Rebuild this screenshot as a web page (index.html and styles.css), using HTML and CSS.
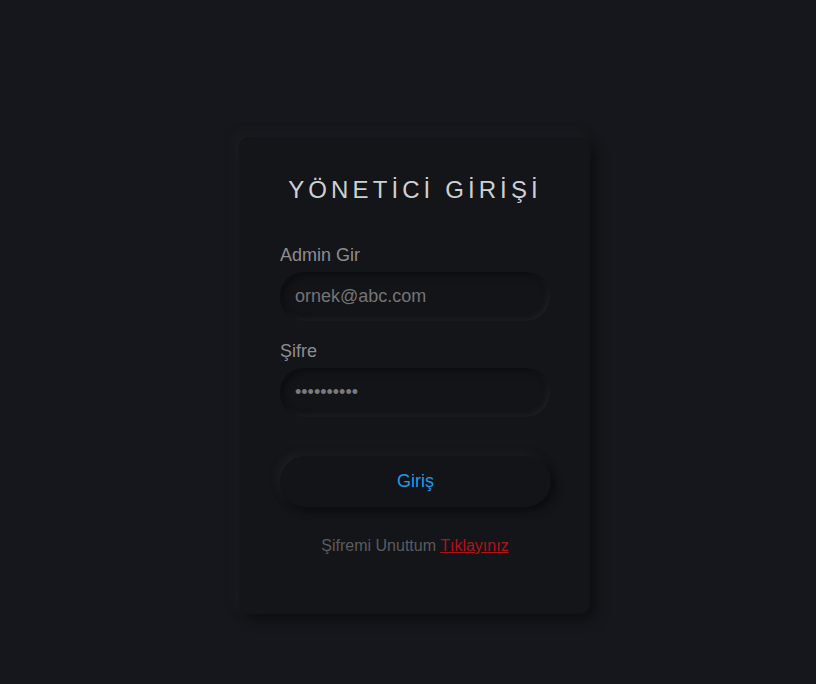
FILE: index.html
```html
<!DOCTYPE html>
<html lang="tr">
<head>
<meta charset="utf-8">
<title>Yönetici Girişi</title>
<link rel="stylesheet" href="styles.css">
</head>
<body>
<div class="page">
  <form class="card">
    <h1 class="title">YÖNETİCİ GİRİŞİ</h1>
    <label class="label" for="email">Admin Gir</label>
    <input class="field" id="email" type="text" placeholder="ornek@abc.com">
    <label class="label" for="pw">Şifre</label>
    <input class="field pw" id="pw" type="password" value="1234567890">
    <button class="btn" type="button">Giriş</button>
    <p class="forgot">Şifremi Unuttum <a href="#">Tıklayınız</a></p>
  </form>
</div>
</body>
</html>
```
FILE: styles.css
```css
* { box-sizing: border-box; }
html, body { margin: 0; padding: 0; }
body {
  background: #16171c;
  font-family: "Liberation Sans", Arial, sans-serif;
  width: 816px;
  height: 684px;
  overflow: hidden;
}
.page {
  display: flex;
  justify-content: center;
  padding-top: 137px;
  padding-left: 13px;
}
.card {
  width: 351px;
  height: 477px;
  background: #141519;
  border-radius: 10px;
  padding: 39px 40px 0 41px;
  display: flex;
  flex-direction: column;
  box-shadow: 6px 6px 12px #0e0f12, -4px -4px 10px #1c1d22;
}
.title {
  margin: 0 0 41px 0;
  font-weight: normal;
  font-size: 24px;
  letter-spacing: 4.1px;
  color: #cfd0d2;
  text-align: center;
  line-height: 28px;
}
.label {
  color: #8d8d8f;
  font-size: 18px;
  line-height: 20px;
  margin-bottom: 7px;
}
.label + .field { margin-bottom: 20px; }
.field {
  width: 270px;
  height: 49px;
  border: none;
  outline: none;
  border-radius: 25px;
  background: #131418;
  box-shadow: inset 3px 3px 6px #0c0d10, inset -2px -2px 5px #202126;
  color: #7a7a7c;
  font-family: "Liberation Sans", Arial, sans-serif;
  font-size: 18px;
  padding: 0 15px;
}
.field::placeholder { color: #737476; }
.pw { color: #7a7a7c; font-size: 18px; }
.btn {
  margin-top: 19px;
  width: 271px;
  height: 51px;
  border: none;
  border-radius: 26px;
  background: #131418;
  box-shadow: 4px 4px 8px #0b0c0e, -3px -3px 7px #1e1f24;
  color: #1a9cf0;
  font-family: "Liberation Sans", Arial, sans-serif;
  font-size: 18px;
  cursor: pointer;
}
.forgot {
  margin: 30px 0 0 0;
  text-align: center;
  color: #5a5b5e;
  font-size: 16px;
  line-height: 18px;
}
.forgot a { color: #b0121a; }
```
